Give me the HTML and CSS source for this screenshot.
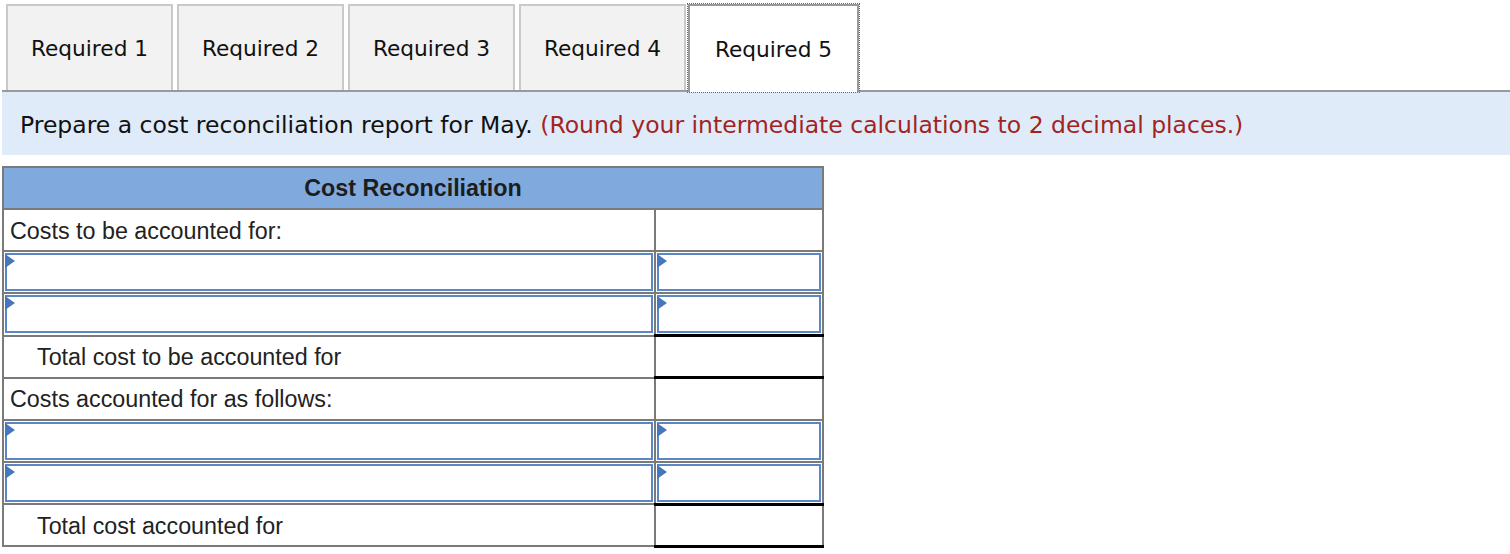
FILE: index.html
```html
<!DOCTYPE html>
<html>
<head>
<meta charset="utf-8">
<link rel="stylesheet" href="styles.css">
</head>
<body>
<div class="page">
  <div class="tabs">
    <div class="tab">Required 1</div>
    <div class="tab">Required 2</div>
    <div class="tab">Required 3</div>
    <div class="tab">Required 4</div>
    <div class="tab active">Required 5</div>
  </div>
  <div class="instructions">
    <span>Prepare a cost reconciliation report for May.</span>&nbsp;<span class="note">(Round your intermediate calculations to 2 decimal places.)</span>
  </div>
  <table class="recon">
    <colgroup><col class="c-label"><col class="c-amt"></colgroup>
    <thead>
      <tr><th colspan="2">Cost Reconciliation</th></tr>
    </thead>
    <tbody>
      <tr><td class="label">Costs to be accounted for:</td><td class="amt"></td></tr>
      <tr><td class="in"><div class="box"></div></td><td class="in"><div class="box"></div></td></tr>
      <tr><td class="in"><div class="box"></div></td><td class="in"><div class="box"></div></td></tr>
      <tr><td class="label indent">Total cost to be accounted for</td><td class="amt total"></td></tr>
      <tr><td class="label">Costs accounted for as follows:</td><td class="amt"></td></tr>
      <tr><td class="in"><div class="box"></div></td><td class="in"><div class="box"></div></td></tr>
      <tr><td class="in"><div class="box"></div></td><td class="in"><div class="box"></div></td></tr>
      <tr><td class="label indent">Total cost accounted for</td><td class="amt total"></td></tr>
    </tbody>
  </table>
</div>
</body>
</html>
```

FILE: styles.css
```css
html, body {
  margin: 0;
  padding: 0;
  background: #fff;
}
.page {
  padding-left: 2px;
}
.tabs {
  display: flex;
  gap: 4px;
  padding: 4px 0 0 4px;
  border-bottom: 2px solid #9a9a9a;
  font-family: "DejaVu Sans", Verdana, sans-serif;
  font-size: 21.7px;
  color: #111;
}
.tab {
  box-sizing: border-box;
  width: 167px;
  height: 86px;
  display: flex;
  align-items: center;
  justify-content: center;
  background: #f2f2f2;
  border: 2px solid #c9c9c9;
  border-bottom: none;
}
.tab.active {
  background: #fff;
  border-color: #999;
  outline: 1px dotted #3d6fc0;
  outline-offset: 0;
  margin-bottom: -2px;
  height: 88px;
  width: 171px;
  margin-left: -2px;
}
.instructions {
  height: 63px;
  display: flex;
  align-items: center;
  padding-left: 18px;
  padding-top: 3px;
  box-sizing: border-box;
  background: #dfebf8;
  font-family: "DejaVu Sans", Verdana, sans-serif;
  font-size: 23.5px;
  color: #111;
  white-space: pre;
}
.note {
  color: #a3231f;
}
.recon {
  margin-top: 11px;
  border-collapse: collapse;
  table-layout: fixed;
  width: 820px;
  font-family: "Liberation Sans", Arial, sans-serif;
  font-size: 23.3px;
  color: #222;
}
.c-label { width: 652px; }
.c-amt { width: 168px; }
.recon th, .recon td {
  border: 2px solid #7a7a7a;
  padding: 0;
  height: 42px;
  box-sizing: border-box;
}
.recon th {
  background: #80aade;
  font-weight: bold;
  text-align: center;
  color: #1d1d1d;
}
.recon td.label {
  padding-left: 6px;
  padding-top: 2px;
}
.recon td.indent {
  padding-left: 33px;
}
.recon td.in {
  padding: 1px;
}
.box {
  box-sizing: border-box;
  height: 38px;
  border: 2px solid #5b87c6;
  position: relative;
}
.box::before {
  content: "";
  position: absolute;
  left: -2px;
  top: -1px;
  width: 0;
  height: 0;
  border-style: solid;
  border-width: 7px 0 7px 10px;
  border-color: transparent transparent transparent #4677bd;
}
.recon td.total {
  border-top: 3px solid #000;
  border-bottom: 3px solid #000;
}
```
